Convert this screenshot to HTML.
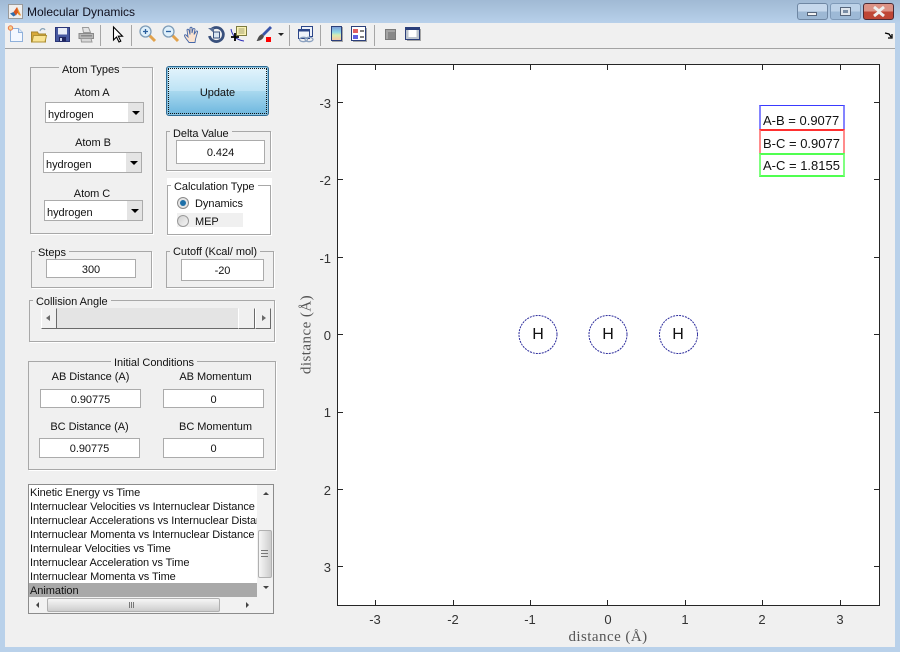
<!DOCTYPE html>
<html><head><meta charset="utf-8"><title>Molecular Dynamics</title>
<style>
html,body{margin:0;padding:0}
body{width:900px;height:652px;position:relative;overflow:hidden;background:#b9d1ea;font-family:"Liberation Sans",sans-serif;font-size:11px;letter-spacing:-.04px;color:#111}
div,span,svg{position:absolute;box-sizing:border-box}
.t{white-space:nowrap;line-height:14px;height:14px}
.c{text-align:center}
.p{border:1px solid #a8a8a8;box-shadow:1px 1px 0 #fff}
.lg{background:#f0f0f0;padding:0 3px;white-space:nowrap;line-height:14px;height:12px}
.e{background:#fff;border:1px solid #ababab;text-align:center;line-height:20px}
.pop{background:#fff;border:1px solid #ababab;height:21px;width:99px;line-height:24px;padding-left:2px}
.pop i{position:absolute;right:0;top:0;width:15px;height:19px;background:#e4e4e4}
.pop b{position:absolute;right:3px;top:8px;width:0;height:0;border-left:4px solid transparent;border-right:4px solid transparent;border-top:4px solid #000}
.ax{font-size:13px;letter-spacing:0;color:#333;line-height:15px;height:15px;white-space:nowrap}
.tk{background:#262626}
.sep{width:1px;height:21px;top:25px;background:#a6a6a6}
.ic{top:24px;width:20px;height:20px}
.row{left:2px;width:228px;height:14px;line-height:16px;white-space:nowrap;overflow:hidden;letter-spacing:-.08px}
</style></head><body>

<!-- title bar -->
<div style="left:0;top:0;width:900px;height:23px;background:linear-gradient(#a0b9d4,#b8d0ea)"></div>
<svg style="left:8px;top:4px" width="15" height="15" viewBox="0 0 15 15"><rect x=".5" y=".5" width="14" height="14" fill="#eee" stroke="#9a9a9a"/><path d="M2 9.500l3.500-1.500 2.500 3-2.500 1.500z" fill="#2f6fb0"/><path d="M5.500 8L9 3l4 8.500-2-.5-1.500-2-1.500 2.500z" fill="#d9561f"/><path d="M9 3l1 5 .8 3 2.200.500z" fill="#f09a2a"/></svg>
<div class="t" style="left:27px;top:5px;font-size:12px;letter-spacing:0;color:#10101e">Molecular Dynamics</div>

<!-- window buttons -->
<div style="left:797px;top:3px;width:31px;height:17px;border:1px solid #6f87a3;border-radius:3px;background:linear-gradient(#c6d8ec 50%,#9db8d4 50%)"></div>
<div style="left:807px;top:12px;width:10px;height:4px;background:#f2f2f2;border:1px solid #56657a"></div>
<div style="left:830px;top:3px;width:31px;height:17px;border:1px solid #7f9ab8;border-radius:3px;background:linear-gradient(#bdd2e8 50%,#9db9d6 50%)"></div>
<div style="left:840px;top:7px;width:11px;height:9px;background:#dfe5ec;border:1px solid #56657a"></div>
<div style="left:843px;top:10px;width:5px;height:3px;background:#7a8ea6"></div>
<div style="left:863px;top:3px;width:31px;height:17px;border:1px solid #4c2a34;border-radius:3px;background:linear-gradient(#dc9286 50%,#bf4636 50%)"></div>
<svg style="left:872px;top:6px" width="14" height="11" viewBox="0 0 14 11"><path d="M2 1l5 4 5-4M2 10l5-4 5 4" stroke="#eee" stroke-width="3" fill="none"/></svg>

<!-- client -->
<div style="left:5px;top:23px;width:890px;height:624px;background:#f0f0f0"></div>
<div style="left:5px;top:48px;width:890px;height:1px;background:#a3a3a3"></div>

<!-- toolbar icons -->
<svg class="ic" style="left:6px" viewBox="0 0 20 20"><path d="M4.500 4.500h8l4 4v9h-12z" fill="#f4f8ff" stroke="#8fb0da"/><path d="M12.500 4.500v4h4" fill="#dbe7f7" stroke="#8fb0da"/><circle cx="4.500" cy="4" r="2.200" fill="#f7d08a" stroke="#e8764a"/></svg>
<svg class="ic" style="left:29px" viewBox="0 0 20 20"><path d="M2.500 8h6l1 2h7v8h-14z" fill="#d8a93a" stroke="#a5852c"/><path d="M3 18l1.500-6.500h13L16 18z" fill="#f9e392" stroke="#b09234"/><path d="M11 7c1-3 4-3 5-1" fill="none" stroke="#8aa4b8" stroke-width="1.200"/></svg>
<svg class="ic" style="left:53px" viewBox="0 0 20 20"><rect x="2.500" y="3.500" width="14" height="14" fill="#47589f" stroke="#2a3678"/><rect x="5" y="4" width="9" height="6.500" fill="#e9edf7"/><rect x="6" y="13" width="7" height="4.500" fill="#20265e"/><rect x="7" y="14" width="2" height="3" fill="#cfd6ee"/></svg>
<svg class="ic" style="left:76px" viewBox="0 0 20 20"><path d="M6.500 3.500h6l2 5h-7z" fill="#e4e4e4" stroke="#9a9a9a"/><path d="M3 9.500h14.500v5H3z" fill="#b8b8b8" stroke="#8a8a8a"/><path d="M5 14.500h10l1 3.500H5.500z" fill="#d8d8d8" stroke="#999"/><rect x="5" y="11" width="11" height="1.500" fill="#8a8a8a"/></svg>
<div class="sep" style="left:100px"></div>
<svg class="ic" style="left:110px" viewBox="0 0 20 20"><path d="M3.500 3v13l3-3 2.500 5 1.800-.9-2.500-4.900H12.500z" fill="#fff" stroke="#000" stroke-width="1.100"/></svg>
<div class="sep" style="left:131px"></div>
<svg class="ic" style="left:138px" viewBox="0 0 20 20"><line x1="11" y1="11" x2="17" y2="17" stroke="#e2a24c" stroke-width="3"/><circle cx="7.500" cy="7.500" r="5.500" fill="#dff0fb" stroke="#7f9db8" stroke-width="1.300"/><path d="M5 7.500h5M7.500 5v5" stroke="#2b5f9e" stroke-width="1.300"/></svg>
<svg class="ic" style="left:161px" viewBox="0 0 20 20"><line x1="11" y1="11" x2="17" y2="17" stroke="#e2a24c" stroke-width="3"/><circle cx="7.500" cy="7.500" r="5.500" fill="#dff0fb" stroke="#7f9db8" stroke-width="1.300"/><path d="M5 7.500h5" stroke="#2b5f9e" stroke-width="1.300"/></svg>
<svg class="ic" style="left:183px" viewBox="0 0 20 20"><path d="M6 18.500c-2-3-4.500-5-4.500-7 0-1 1.500-1 2 0l1.500 1.500-1-7c0-1 1.500-1 2 0l1 4.500V4c0-1 2-1 2 0v5l1-4c.5-1 2-.5 2 .500l-1 5 2-3c.5-1 2-.5 1.500.500-.5 3-2 5-2.500 10.500z" fill="#fbe3cf" stroke="#4668a8" stroke-width=".9"/></svg>
<svg class="ic" style="left:206px" viewBox="0 0 20 20"><path d="M5 6a7 7 0 1 1-1.500 6" fill="none" stroke="#39507c" stroke-width="2.800"/><path d="M2 4h6v5z" fill="#5a6f95"/><rect x="7.500" y="8" width="6" height="6" fill="#d8e4f0" stroke="#39507c"/></svg>
<svg class="ic" style="left:229px" viewBox="0 0 20 20"><rect x="7.500" y="2.500" width="10" height="9" fill="#fbf3b4" stroke="#7c7a40"/><path d="M9.500 5h6M9.500 7h6M9.500 9h6" stroke="#8a8860" stroke-width=".8"/><path d="M2 5c1 6 5 11 13 12" fill="none" stroke="#2c2cb8"/><path d="M2 13h8M6 9v8" stroke="#000" stroke-width="1.800"/></svg>
<svg class="ic" style="left:254px" viewBox="0 0 20 20"><path d="M16 2l2 2-8 8-2-2z" fill="#3a55a8"/><path d="M8 10l2 2c-1 4-5 5-7.500 5 1.500-1.500 1-5 5.500-7z" fill="#4c4c4c"/><rect x="12" y="13" width="5" height="5" fill="#f00"/></svg>
<div style="left:278px;top:33px;width:0;height:0;border-left:3px solid transparent;border-right:3px solid transparent;border-top:3px solid #222"></div>
<div class="sep" style="left:289px"></div>
<svg class="ic" style="left:296px" viewBox="0 0 20 20"><rect x="5.500" y="2.500" width="11" height="10" fill="#eef2fa" stroke="#2b4588"/><rect x="2.500" y="5.500" width="11" height="9" fill="#eef2fa" stroke="#2b4588"/><rect x="2.500" y="5.500" width="11" height="2" fill="#2b4588"/><ellipse cx="7.500" cy="15.500" rx="4" ry="2.200" fill="none" stroke="#8ba1c0" stroke-width="1.300"/><ellipse cx="13" cy="15.500" rx="4" ry="2.200" fill="none" stroke="#8ba1c0" stroke-width="1.300"/></svg>
<div class="sep" style="left:320px"></div>
<div style="left:331px;top:26px;width:11px;height:15px;border:1px solid #2b3f7a;background:linear-gradient(#7e9fd8,#8fd8e8 40%,#d8ecb0 62%,#f6c8a8);box-shadow:1px 1px 0 #a5a5a5"></div>
<svg class="ic" style="left:350px" viewBox="0 0 20 20"><rect x="1.500" y="2.500" width="14" height="14" fill="#fff" stroke="#2b3f7a"/><rect x="3" y="5" width="5" height="4" fill="#e06060"/><rect x="3" y="11" width="5" height="4" fill="#6060e0"/><path d="M10 7h4M10 13h4" stroke="#000"/><path d="M16.500 4v13.500H3" fill="none" stroke="#a5a5a5"/></svg>
<div class="sep" style="left:374px"></div>
<div style="left:385px;top:29px;width:11px;height:11px;background:#888;border:1px solid #7a7a7a;box-shadow:inset 2px 2px 0 #a4a4a4"></div>
<svg class="ic" style="left:404px" viewBox="0 0 20 20"><rect x="1.500" y="3.500" width="14" height="12" fill="#fff" stroke="#2b3f7a"/><rect x="2" y="4" width="13" height="2" fill="#2b3f7a"/><rect x="2" y="6" width="2.500" height="9" fill="#bcc4ce"/><rect x="12.500" y="6" width="2.500" height="9" fill="#bcc4ce"/><rect x="2" y="13" width="13" height="2" fill="#bcc4ce"/><path d="M16.500 5v11.500H3" fill="none" stroke="#a5a5a5"/></svg>
<svg style="left:884px;top:32px" width="9" height="7" viewBox="0 0 9 7"><path d="M1 1l4 1 2 3M4 6h4V2" fill="none" stroke="#000" stroke-width="1.300"/></svg>

<!-- Atom Types -->
<div class="p" style="left:30px;top:67px;width:123px;height:167px"></div>
<div class="lg" style="left:59px;top:63px">Atom Types</div>
<div class="t c" style="left:50px;top:86px;width:84px">Atom A</div>
<div class="pop" style="left:45px;top:102px">hydrogen<i></i><b></b></div>
<div class="t c" style="left:50px;top:136px;width:86px">Atom B</div>
<div class="pop" style="left:43px;top:152px">hydrogen<i></i><b></b></div>
<div class="t c" style="left:50px;top:187px;width:84px">Atom C</div>
<div class="pop" style="left:44px;top:200px">hydrogen<i></i><b></b></div>

<!-- Update -->
<div class="c" style="left:166px;top:66px;width:103px;height:50px;border:1px solid #2d6a94;border-radius:3px;background:linear-gradient(#e4f4fc,#bde3f5 50%,#a9d9ef 50%,#6cb6de);line-height:52px;box-shadow:inset 0 0 0 1px #8cc4e0">Update</div>
<div style="left:168px;top:68px;width:99px;height:46px;border:1px dotted #111"></div>

<!-- Delta -->
<div class="p" style="left:166px;top:131px;width:105px;height:40px"></div>
<div class="lg" style="left:170px;top:127px">Delta Value</div>
<div class="e" style="left:176px;top:140px;width:89px;height:24px;line-height:24px">0.424</div>

<!-- Calc type -->
<div style="left:167px;top:178px;width:105px;height:58px;background:#fff"></div>
<div style="left:167px;top:185px;width:104px;height:50px;border:1px solid #a8a8a8"></div>
<div class="lg" style="left:171px;top:180px;background:#fff">Calculation Type</div>
<div style="left:177px;top:213px;width:66px;height:14px;background:#f0f0f0"></div>
<div style="left:177px;top:197px;width:12px;height:12px;border-radius:50%;border:1px solid #8a8a8a;background:#e6e6e6"></div>
<div style="left:180px;top:200px;width:6px;height:6px;border-radius:50%;background:#1d6fa8"></div>
<div style="left:177px;top:215px;width:12px;height:12px;border-radius:50%;border:1px solid #9a9a9a;background:linear-gradient(135deg,#d0d0d0,#f6f6f6)"></div>
<div class="t" style="left:195px;top:197px">Dynamics</div>
<div class="t" style="left:195px;top:215px">MEP</div>

<!-- Steps -->
<div class="p" style="left:31px;top:251px;width:121px;height:37px"></div>
<div class="lg" style="left:35px;top:246px">Steps</div>
<div class="e" style="left:46px;top:259px;width:90px;height:19px">300</div>

<!-- Cutoff -->
<div class="p" style="left:166px;top:251px;width:108px;height:37px"></div>
<div class="lg" style="left:170px;top:245px">Cutoff (Kcal/ mol)</div>
<div class="e" style="left:181px;top:259px;width:83px;height:22px;line-height:23px">-20</div>

<!-- Collision -->
<div class="p" style="left:29px;top:300px;width:246px;height:42px"></div>
<div class="lg" style="left:33px;top:295px">Collision Angle</div>
<div style="left:41px;top:308px;width:230px;height:21px;background:#e4e4e4;border-bottom:1px solid #6a6a6a"></div>
<div style="left:41px;top:308px;width:16px;height:21px;background:#f0f0f0;border-left:1px solid #fff;border-top:1px solid #f0f0f0;border-right:1px solid #6a6a6a;border-bottom:1px solid #6a6a6a"></div>
<div style="left:46px;top:315px;width:0;height:0;border-top:3.500px solid transparent;border-bottom:3.500px solid transparent;border-right:4px solid #6a6a6a"></div>
<div style="left:238px;top:308px;width:17px;height:21px;background:#f0f0f0;border-left:1px solid #fff;border-top:1px solid #f0f0f0;border-right:1px solid #6a6a6a;border-bottom:1px solid #6a6a6a"></div>
<div style="left:255px;top:308px;width:16px;height:21px;background:#f0f0f0;border-left:1px solid #fff;border-top:1px solid #f0f0f0;border-right:1px solid #6a6a6a;border-bottom:1px solid #6a6a6a"></div>
<div style="left:262px;top:315px;width:0;height:0;border-top:3.500px solid transparent;border-bottom:3.500px solid transparent;border-left:4px solid #6a6a6a"></div>

<!-- Initial conditions -->
<div class="p" style="left:28px;top:361px;width:248px;height:109px"></div>
<div class="lg" style="left:111px;top:356px">Initial Conditions</div>
<div class="t c" style="left:40px;top:370px;width:101px">AB Distance (A)</div>
<div class="t c" style="left:163px;top:370px;width:105px">AB Momentum</div>
<div class="e" style="left:40px;top:389px;width:101px;height:19px">0.90775</div>
<div class="e" style="left:163px;top:389px;width:101px;height:19px">0</div>
<div class="t c" style="left:39px;top:420px;width:101px">BC Distance (A)</div>
<div class="t c" style="left:163px;top:420px;width:105px">BC Momentum</div>
<div class="e" style="left:39px;top:438px;width:101px;height:20px;line-height:21px">0.90775</div>
<div class="e" style="left:163px;top:438px;width:101px;height:20px;line-height:21px">0</div>

<!-- listbox -->
<div style="left:28px;top:484px;width:246px;height:130px;background:#fff;border:1px solid #8c8c8c"></div>
<div style="left:29px;top:485px;width:228px;height:112px;overflow:hidden">
<div class="row" style="left:1px;top:0">Kinetic Energy vs Time</div>
<div class="row" style="left:1px;top:14px">Internuclear Velocities vs Internuclear Distance</div>
<div class="row" style="left:1px;top:28px">Internuclear Accelerations vs Internuclear Distance</div>
<div class="row" style="left:1px;top:42px">Internuclear Momenta vs Internuclear Distance</div>
<div class="row" style="left:1px;top:56px">Internulear Velocities vs Time</div>
<div class="row" style="left:1px;top:70px">Internuclear Acceleration vs Time</div>
<div class="row" style="left:1px;top:84px">Internuclear Momenta vs Time</div>
<div style="left:0;top:98px;width:228px;height:14px;background:#a9a9a9;line-height:16px;padding-left:1px">Animation</div>
</div>
<div style="left:257px;top:485px;width:16px;height:128px;background:#f2f2f2"></div>
<div style="left:29px;top:597px;width:244px;height:16px;background:#f2f2f2"></div>
<div style="left:263px;top:492px;width:0;height:0;border-left:3.500px solid transparent;border-right:3.500px solid transparent;border-bottom:3.500px solid #444"></div>
<div style="left:263px;top:586px;width:0;height:0;border-left:3.500px solid transparent;border-right:3.500px solid transparent;border-top:3.500px solid #444"></div>
<div style="left:258px;top:530px;width:14px;height:48px;border:1px solid #b0b0b0;border-radius:2px;background:linear-gradient(90deg,#f6f6f6,#e2e2e2 50%,#cdcdcd)"></div>
<div style="left:261px;top:550px;width:7px;height:7px;border-top:1px solid #777;border-bottom:1px solid #777"></div>
<div style="left:261px;top:553px;width:7px;height:1px;background:#777"></div>
<div style="left:36px;top:602px;width:0;height:0;border-top:3.500px solid transparent;border-bottom:3.500px solid transparent;border-right:3.500px solid #444"></div>
<div style="left:246px;top:602px;width:0;height:0;border-top:3.500px solid transparent;border-bottom:3.500px solid transparent;border-left:3.500px solid #444"></div>
<div style="left:47px;top:598px;width:173px;height:14px;border:1px solid #b0b0b0;border-radius:2px;background:linear-gradient(#f6f6f6,#e2e2e2 50%,#cdcdcd)"></div>
<div style="left:129px;top:602px;width:1px;height:6px;background:#777;box-shadow:2px 0 0 #777,4px 0 0 #777"></div>

<!-- axes -->
<div style="left:337px;top:64px;width:543px;height:542px;background:#fff;border:1px solid #262626"></div>
<div class="tk" style="left:375px;top:64px;width:1px;height:6px"></div><div class="tk" style="left:375px;top:600px;width:1px;height:6px"></div>
<div class="tk" style="left:453px;top:64px;width:1px;height:6px"></div><div class="tk" style="left:453px;top:600px;width:1px;height:6px"></div>
<div class="tk" style="left:530px;top:64px;width:1px;height:6px"></div><div class="tk" style="left:530px;top:600px;width:1px;height:6px"></div>
<div class="tk" style="left:607px;top:64px;width:1px;height:6px"></div><div class="tk" style="left:607px;top:600px;width:1px;height:6px"></div>
<div class="tk" style="left:685px;top:64px;width:1px;height:6px"></div><div class="tk" style="left:685px;top:600px;width:1px;height:6px"></div>
<div class="tk" style="left:762px;top:64px;width:1px;height:6px"></div><div class="tk" style="left:762px;top:600px;width:1px;height:6px"></div>
<div class="tk" style="left:840px;top:64px;width:1px;height:6px"></div><div class="tk" style="left:840px;top:600px;width:1px;height:6px"></div>

<div class="tk" style="left:337px;top:102px;width:6px;height:1px"></div><div class="tk" style="left:874px;top:102px;width:6px;height:1px"></div>
<div class="tk" style="left:337px;top:179px;width:6px;height:1px"></div><div class="tk" style="left:874px;top:179px;width:6px;height:1px"></div>
<div class="tk" style="left:337px;top:257px;width:6px;height:1px"></div><div class="tk" style="left:874px;top:257px;width:6px;height:1px"></div>
<div class="tk" style="left:337px;top:334px;width:6px;height:1px"></div><div class="tk" style="left:874px;top:334px;width:6px;height:1px"></div>
<div class="tk" style="left:337px;top:412px;width:6px;height:1px"></div><div class="tk" style="left:874px;top:412px;width:6px;height:1px"></div>
<div class="tk" style="left:337px;top:489px;width:6px;height:1px"></div><div class="tk" style="left:874px;top:489px;width:6px;height:1px"></div>
<div class="tk" style="left:337px;top:566px;width:6px;height:1px"></div><div class="tk" style="left:874px;top:566px;width:6px;height:1px"></div>

<div class="ax c" style="left:355px;top:612px;width:40px">-3</div>
<div class="ax c" style="left:433px;top:612px;width:40px">-2</div>
<div class="ax c" style="left:510px;top:612px;width:40px">-1</div>
<div class="ax c" style="left:588px;top:612px;width:40px">0</div>
<div class="ax c" style="left:665px;top:612px;width:40px">1</div>
<div class="ax c" style="left:742px;top:612px;width:40px">2</div>
<div class="ax c" style="left:820px;top:612px;width:40px">3</div>

<div class="ax" style="left:295px;top:96px;width:36px;text-align:right">-3</div>
<div class="ax" style="left:295px;top:173px;width:36px;text-align:right">-2</div>
<div class="ax" style="left:295px;top:251px;width:36px;text-align:right">-1</div>
<div class="ax" style="left:295px;top:328px;width:36px;text-align:right">0</div>
<div class="ax" style="left:295px;top:405px;width:36px;text-align:right">1</div>
<div class="ax" style="left:295px;top:483px;width:36px;text-align:right">2</div>
<div class="ax" style="left:295px;top:560px;width:36px;text-align:right">3</div>

<div class="ax c" style="left:548px;top:630px;width:120px;font-family:'Liberation Serif',serif;font-size:15px;letter-spacing:.45px;color:#555">distance (Å)</div>
<div class="ax c" style="left:247px;top:327px;width:120px;font-family:'Liberation Serif',serif;font-size:15px;letter-spacing:.45px;color:#555;transform:rotate(-90deg)">distance (Å)</div>

<!-- legends -->
<div class="ax" style="left:759px;top:105px;width:86px;height:25px;border:solid;border-color:#3a3aff #8484ff;border-width:1px 2px 1px 2px;padding:7px 0 0 2px;color:#111">A-B = 0.9077</div>
<div class="ax" style="left:759px;top:129px;width:86px;height:25px;border:solid;border-color:#ff3030 #ff8c8c;border-width:2px 2px 1px 2px;padding:5px 0 0 2px;color:#111">B-C = 0.9077</div>
<div class="ax" style="left:759px;top:153px;width:86px;height:24px;border:solid;border-color:#50ff50 #80ff80;border-width:2px 2px 2px 2px;padding:3px 0 0 2px;color:#111">A-C = 1.8155</div>

<!-- atoms -->
<svg style="left:500px;top:300px" width="210" height="70" viewBox="0 0 210 70"><g fill="none" stroke="#2c2c9c" stroke-dasharray="2 1"><circle cx="38" cy="34.500" r="19"/><circle cx="108" cy="34.500" r="19"/><circle cx="178.500" cy="34.500" r="19"/></g></svg>
<div class="ax c" style="left:518px;top:326px;width:40px;font-size:16px;height:17px;line-height:17px;color:#111">H</div>
<div class="ax c" style="left:588px;top:326px;width:40px;font-size:16px;height:17px;line-height:17px;color:#111">H</div>
<div class="ax c" style="left:658px;top:326px;width:40px;font-size:16px;height:17px;line-height:17px;color:#111">H</div>
</body></html>
